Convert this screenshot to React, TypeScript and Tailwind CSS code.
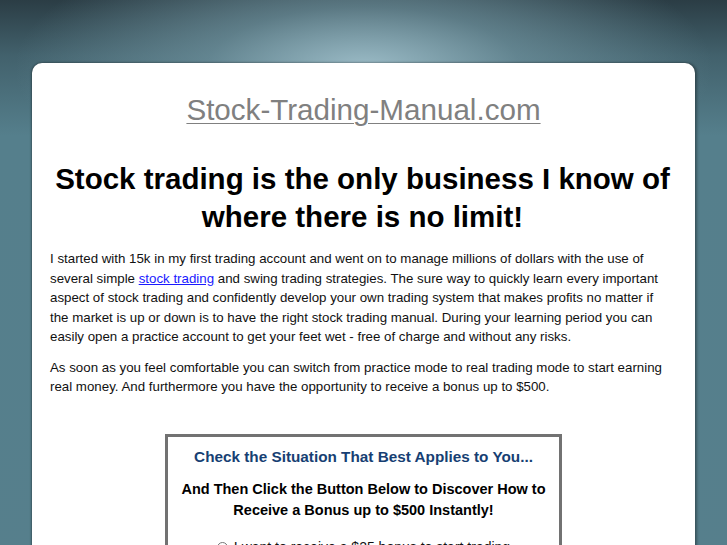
export default function App() {
  return (
    <div className="min-h-[545px] overflow-hidden bg-[radial-gradient(ellipse_48%_22%_at_50%_11%,rgba(160,192,203,0.95)_0%,rgba(120,156,168,0.6)_45%,transparent_100%),linear-gradient(to_bottom,#2b3d45_0%,#42616c_9%,#557f8c_22%,#567f8c_100%)] pt-[63px] font-['Liberation_Sans',Arial,sans-serif]">
      <div className="mx-[32px] w-[663px] rounded-t-[10px] bg-white pl-[18px] pr-[30px] pt-[30px] pb-10 shadow-[2px_0_3px_rgba(0,0,0,0.35),-1px_0_2px_rgba(0,0,0,0.3)]">
        <h2 className="-mr-[12px] text-center text-[29.6px] leading-[34px] text-[#808080]">
          <a href="#" className="underline decoration-1 underline-offset-[3px]">Stock-Trading-Manual.com</a>
        </h2>

        <h1 className="mt-[33px] -mr-[10px] text-center text-[29.5px] font-bold leading-[38px] text-black">
          Stock trading is the only business I know of where there is no limit!
        </h1>

        <p className="mt-[13px] text-[13.3px] leading-[19.5px] text-[#111]">
          I started with 15k in my first trading account and went on to manage millions of dollars with the use of several simple{" "}
          <a href="#" className="text-[#1a1aff] underline">stock trading</a> and swing trading strategies. The sure way to quickly learn every
          important aspect of stock trading and confidently develop your own trading system that makes profits no matter if the market is up
          or down is to have the right stock trading manual. During your learning period you can easily open a practice account to get your
          feet wet - free of charge and without any risks.
        </p>
        <p className="mt-[11px] text-[13.3px] leading-[19.5px] text-[#111]">
          As soon as you feel comfortable you can switch from practice mode to real trading mode to start earning real money. And furthermore
          you have the opportunity to receive a bonus up to $500.
        </p>

        {/* bonus offer form */}
        <div className="mt-[37px] ml-[115px] w-[397px] border-[3px] border-[#727272] px-1 pt-[9px] pb-4 text-center">
          <p className="text-[15.3px] font-bold leading-[22px] text-[#173f73]">Check the Situation That Best Applies to You...</p>
          <p className="mt-[11px] text-[14.5px] font-bold leading-[21px] text-black">
            And Then Click the Button Below to Discover How to Receive a Bonus up to $500 Instantly!
          </p>
          <label className="mt-[16px] flex items-center justify-center gap-[6px] text-[14px] text-[#111]">
            <input type="radio" name="bonus" className="h-[11px] w-[11px]" />
            I want to receive a $25 bonus to start trading
          </label>
        </div>
      </div>
    </div>
  );
}
